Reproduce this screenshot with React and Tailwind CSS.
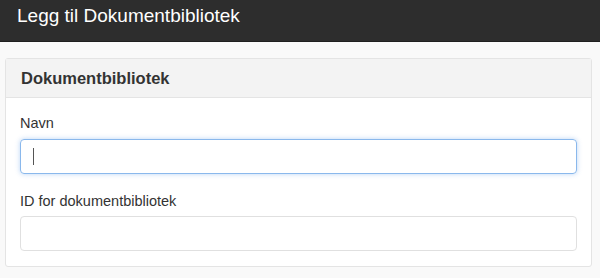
import React from 'react'

const font = { fontFamily: '"Liberation Sans", Arial, Helvetica, sans-serif' }

const App = () => {
  return (
    <div className="min-h-[278px] bg-[#f9f9f9]" style={font}>
      <div className="h-[42px] bg-[#2d2d2d] border-b border-[#1f1f1f] px-[17px] pt-[6px]">
        <h1 className="text-[19px] text-white leading-none">Legg til Dokumentbibliotek</h1>
      </div>

      <div className="px-[5px] pt-[16px] pr-[8px]">
        <div className="bg-white border border-[#e4e4e4] rounded-[3px]">
          <div className="h-[39px] bg-[#f3f3f3] border-b border-[#e4e4e4] flex items-center px-[15px]">
            <h2 className="text-[16.5px] font-bold text-[#333]">Dokumentbibliotek</h2>
          </div>
          <div className="px-[14px] pt-[18px] pb-[15px]">
            <label className="block text-[14.5px] text-[#333] leading-[15px] mb-[8px]">Navn</label>
            <div className="relative">
              <input
                type="text"
                className="w-full h-[35px] px-[12px] text-[14px] border border-[#8ab8ec] rounded-[4px] shadow-[0_0_5px_rgba(102,160,233,0.45)] outline-none"
              />
              <span className="absolute left-[13px] top-[9px] h-[17px] w-px bg-[#555]" />
            </div>
            <label className="block text-[14.5px] text-[#333] leading-[15px] mt-[20px] mb-[7px]">ID for dokumentbibliotek</label>
            <input
              type="text"
              className="w-full h-[35px] px-[12px] text-[14px] border border-[#e0e0e0] rounded-[4px] outline-none"
            />
          </div>
        </div>
      </div>
    </div>
  )
}

export default App
